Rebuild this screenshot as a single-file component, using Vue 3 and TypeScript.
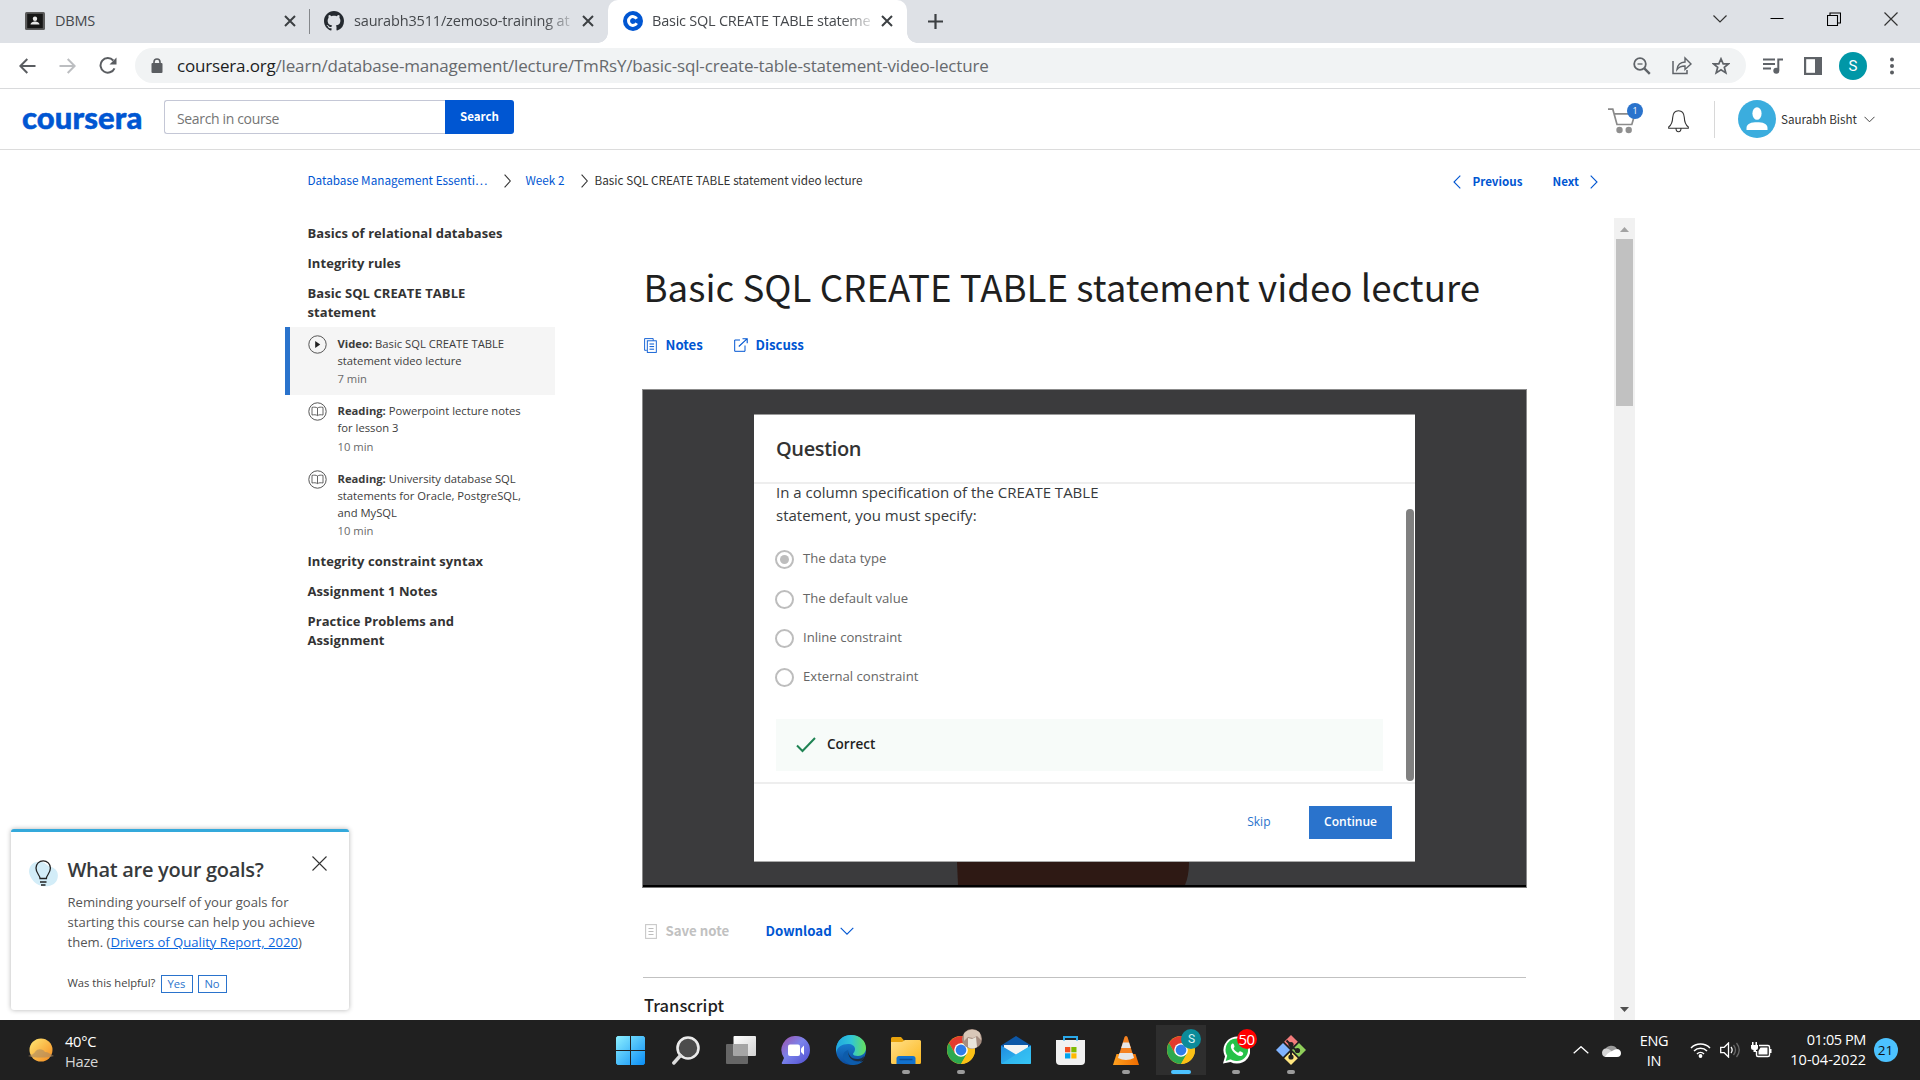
<script setup lang="ts">
interface LessonItem {
  kind: 'video' | 'reading'
  label: string
  lines: string[]
  duration: string
  active?: boolean
}

const items: LessonItem[] = [
  { kind: 'video', label: 'Video:', lines: ['Basic SQL CREATE TABLE', 'statement video lecture'], duration: '7 min', active: true },
  { kind: 'reading', label: 'Reading:', lines: ['Powerpoint lecture notes', 'for lesson 3'], duration: '10 min' },
  { kind: 'reading', label: 'Reading:', lines: ['University database SQL', 'statements for Oracle, PostgreSQL,', 'and MySQL'], duration: '10 min' },
]

const sectionsBefore: string[][] = [['Basics of relational databases'], ['Integrity rules'], ['Basic SQL CREATE TABLE', 'statement']]
const sectionsAfter: string[][] = [['Integrity constraint syntax'], ['Assignment 1 Notes'], ['Practice Problems and', 'Assignment']]

const options = [
  { text: 'The data type', checked: true },
  { text: 'The default value', checked: false },
  { text: 'Inline constraint', checked: false },
  { text: 'External constraint', checked: false },
]
</script>

<template>
  <div class="screen">
    <svg class="defs" width="0" height="0">
      <defs>
        <linearGradient id="win" x1="0" y1="0" x2="1" y2="1"><stop offset="0" stop-color="#8df0ff" /><stop offset="1" stop-color="#0a8df5" /></linearGradient>
        <linearGradient id="chat" x1="0" y1="0" x2="1" y2="1"><stop offset="0" stop-color="#a14fa8" /><stop offset=".45" stop-color="#7b83eb" /><stop offset="1" stop-color="#4f4ccf" /></linearGradient>
        <linearGradient id="edgeA" x1="0" y1="0" x2="1" y2="0"><stop offset="0" stop-color="#1fa7e0" /><stop offset=".5" stop-color="#30c5d8" /><stop offset="1" stop-color="#66e05b" /></linearGradient>
        <linearGradient id="edgeB" x1="0" y1="0" x2="0" y2="1"><stop offset="0" stop-color="#1b8fe0" /><stop offset="1" stop-color="#0c4a9c" /></linearGradient>
        <linearGradient id="folder" x1="0" y1="0" x2="1" y2="1"><stop offset="0" stop-color="#ffe08a" /><stop offset="1" stop-color="#fcb71e" /></linearGradient>
        <linearGradient id="mail" x1="0" y1="0" x2="1" y2="1"><stop offset="0" stop-color="#1f8be0" /><stop offset="1" stop-color="#35c5f5" /></linearGradient>
        <linearGradient id="sun" x1="0" y1="0" x2="1" y2="1"><stop offset="0" stop-color="#ffe873" /><stop offset="1" stop-color="#f58a1f" /></linearGradient>
        <linearGradient id="tv" x1="0" y1="0" x2="1" y2="1"><stop offset="0" stop-color="#fff" /><stop offset="1" stop-color="#d2d2d2" /></linearGradient>
        <linearGradient id="cone" x1="0" y1="0" x2="1" y2="0"><stop offset="0" stop-color="#ffa11f" /><stop offset="1" stop-color="#ef6c00" /></linearGradient>
        <symbol id="chrome" viewBox="0 0 28 28">
          <circle cx="14" cy="14" r="14" fill="#fbc116" />
          <path d="M14 7 H26.1 A14 14 0 0 0 1.9 7 L8 17.4 Z" fill="#e33b2e" />
          <path d="M1.9 7 A14 14 0 0 0 14 28 L20 17.5 L14 14 L8 17.5 Z" fill="#2da94f" />
          <path d="M14 28 A14 14 0 0 0 26.1 7 H14 L20 17.5 Z" fill="#fbc116" />
          <circle cx="14" cy="14" r="6.8" fill="#fff" />
          <circle cx="14" cy="14" r="5.4" fill="#2f7de9" />
        </symbol>
      </defs>
    </svg>

    <header class="tabs">
      <div class="tab tab1">
        <svg width="20" height="18" viewBox="0 0 20 18"><rect width="20" height="18" rx="1.5" fill="#5b5b5b" /><rect x="2.2" y="1.8" width="15.6" height="14.4" fill="#161616" /><circle cx="10" cy="6.7" r="2.2" fill="#e8e8e8" /><path d="M5.5 12.6c0-2.2 2.6-3.2 4.5-3.2s4.5 1 4.5 3.2z" fill="#e8e8e8" /></svg>
        <span class="tt t-a">DBMS</span>
        <svg class="x" width="12" height="12" viewBox="0 0 12 12"><path d="M1 1l10 10M11 1L1 11" stroke="#3c4043" stroke-width="2" /></svg>
      </div>
      <div class="sep"></div>
      <div class="tab tab2">
        <svg width="20" height="20" viewBox="0 0 16 16"><path fill="#24292f" d="M8 0C3.580 0 0 3.580 0 8c0 3.540 2.290 6.530 5.470 7.590.4.070.550-.170.550-.380 0-.190-.010-.820-.010-1.490-2.010.370-2.530-.490-2.690-.940-.090-.230-.480-.940-.820-1.130-.280-.150-.680-.520-.010-.530.630-.010 1.080.580 1.230.820.720 1.210 1.870.870 2.330.660.070-.520.280-.870.510-1.070-1.780-.200-3.640-.890-3.640-3.950 0-.870.310-1.590.820-2.150-.080-.200-.360-1.020.080-2.120 0 0 .670-.210 2.200.820.640-.180 1.320-.270 2-.270s1.360.090 2 .270c1.530-1.040 2.200-.820 2.200-.820.440 1.100.160 1.920.080 2.120.510.560.820 1.270.820 2.150 0 3.070-1.870 3.750-3.650 3.950.290.250.540.730.540 1.480 0 1.070-.010 1.930-.010 2.200 0 .210.150.460.550.380A8.010 8.010 0 0 0 16 8c0-4.420-3.580-8-8-8z" /></svg>
        <span class="tt t-b">saurabh3511/zemoso-training at</span>
        <svg class="x" width="12" height="12" viewBox="0 0 12 12"><path d="M1 1l10 10M11 1L1 11" stroke="#3c4043" stroke-width="2" /></svg>
      </div>
      <div class="tab tab3">
        <svg width="20" height="20" viewBox="0 0 20 20"><circle cx="10" cy="10" r="10" fill="#0056d2" /><path d="M13.7 7.7A4.4 4.4 0 1 0 13.7 12.3" fill="none" stroke="#fff" stroke-width="3" /></svg>
        <span class="tt t-c">Basic SQL CREATE TABLE stateme</span>
        <svg class="x" width="12" height="12" viewBox="0 0 12 12"><path d="M1 1l10 10M11 1L1 11" stroke="#3c4043" stroke-width="2" /></svg>
      </div>
      <svg class="plus" width="15" height="15" viewBox="0 0 15 15"><path d="M7.5 0v15M0 7.5h15" stroke="#3c4043" stroke-width="2.2" /></svg>
      <div class="winctl">
        <svg width="14" height="14" viewBox="0 0 14 14"><path d="M.5 3.5L7 10l6.500-6.500" fill="none" stroke="#333" stroke-width="1.2" /></svg>
        <svg width="14" height="14" viewBox="0 0 14 14"><path d="M.5 6.500h13" stroke="#000" /></svg>
        <svg width="14" height="14" viewBox="0 0 14 14"><path d="M.5 3.5h10v10h-10zM3 3.5V1h10.500v10H11" fill="none" stroke="#000" stroke-width="1.1" /></svg>
        <svg width="14" height="14" viewBox="0 0 14 14"><path d="M.5.5l13 13M13.500.5l-13 13" stroke="#333" stroke-width="1.2" /></svg>
      </div>
    </header>

    <div class="toolbar">
      <svg class="back" width="17" height="16" viewBox="0 0 17 16"><path d="M16.500 8H1.500M8.300 1L1.300 8l7 7" fill="none" stroke="#5a5d61" stroke-width="2" /></svg>
      <svg class="fwd" width="17" height="16" viewBox="0 0 17 16"><path d="M.5 8h15M8.700 1l7 7-7 7" fill="none" stroke="#bcbec1" stroke-width="2" /></svg>
      <svg class="reload" width="18" height="17" viewBox="0 0 18 17"><path d="M15.500 11.300A7.300 7.300 0 1 1 14.300 3.500" fill="none" stroke="#5a5d61" stroke-width="2" /><path d="M17.500.5v7h-7z" fill="#5a5d61" /></svg>
      <div class="omni">
        <svg class="lock" width="12" height="15" viewBox="0 0 12 15"><rect x=".5" y="5" width="11" height="10" rx="1" fill="#5a5d61" /><path d="M3 6V4a3 3 0 0 1 6 0v2" fill="none" stroke="#5a5d61" stroke-width="1.6" /></svg>
        <span class="url"><b>coursera.org</b>/learn/database-management/lecture/TmRsY/basic-sql-create-table-statement-video-lecture</span>
        <svg class="zo" width="18" height="18" viewBox="0 0 18 18"><circle cx="7" cy="7" r="5.8" fill="none" stroke="#5f6368" stroke-width="1.8" /><path d="M4.500 7h5" stroke="#5f6368" stroke-width="1.3" /><path d="M11.300 11.300l5.500 5.500" stroke="#5f6368" stroke-width="2.4" /></svg>
        <svg class="sh" width="20" height="19" viewBox="0 0 20 19"><path d="M1 5v12.500h14V14" fill="none" stroke="#5f6368" stroke-width="1.5" /><path d="M5 13.500c.6-5 3.500-7.300 8-7.500V2l6 6-6 5.500V10c-3.500 0-6 .8-8 3.500z" fill="none" stroke="#5f6368" stroke-width="1.4" /></svg>
        <svg class="st" width="18" height="18" viewBox="0 0 18 18"><path d="M9 1.800l2.200 5h5.300l-4.200 3.500 1.500 5.600L9 12.700l-4.800 3.200 1.500-5.600L1.500 6.800h5.300z" fill="none" stroke="#5f6368" stroke-width="1.7" /></svg>
      </div>
      <svg class="pl" width="20" height="16" viewBox="0 0 20 16"><path d="M0 1.500h12M0 6h12M0 10.500h8" stroke="#5f6368" stroke-width="1.9" /><path d="M15.300 12.500V1.500H20" fill="none" stroke="#5f6368" stroke-width="2" /><circle cx="13.300" cy="12.700" r="3" fill="#5f6368" /></svg>
      <svg class="sp" width="18" height="18" viewBox="0 0 18 18"><rect x="1.100" y="1.100" width="15.800" height="15.800" fill="none" stroke="#5f6368" stroke-width="2.2" /><rect x="11" y="0" width="7" height="18" fill="#5f6368" /></svg>
      <span class="me">S</span>
      <svg class="dots" width="4" height="18" viewBox="0 0 4 18"><circle cx="2" cy="2.500" r="2" fill="#5a5d61" /><circle cx="2" cy="9" r="2" fill="#5a5d61" /><circle cx="2" cy="15.500" r="2" fill="#5a5d61" /></svg>
    </div>

    <div class="chead">
      <span class="logo">coursera</span>
      <div class="search"><span class="ph">Search in course</span><span class="sbtn">Search</span></div>
      <div class="cart">
        <svg width="28" height="26" viewBox="0 0 28 26"><path d="M0 1.200h4.800L9 16.500h14.800L27 5.800H6" fill="none" stroke="#8a8a8a" stroke-width="1.700" /><circle cx="11.500" cy="22" r="3.200" fill="#8f8f8f" /><circle cx="20.700" cy="22" r="3.200" fill="#8f8f8f" /></svg>
        <span class="cb">1</span>
      </div>
      <svg class="bell" width="21" height="23" viewBox="0 0 21 23"><path d="M.7 18.300V17c2.300-1.700 3.800-4 4-9.500C5 3 7.500.7 10.500.7S16 3 16.300 7.500c.2 5.500 1.700 7.800 4 9.500v1.300zM8 18.300c0 4.600 5 4.600 5 0" fill="none" stroke="#333" stroke-width="1.1" /></svg>
      <div class="vline"></div>
      <svg class="ava" width="38" height="38" viewBox="0 0 38 38"><circle cx="19" cy="19" r="19" fill="#3badde" /><ellipse cx="19" cy="13.500" rx="4.600" ry="6.300" fill="#fff" /><path d="M8.500 30v-2c0-4.500 5-5.700 10.500-5.700S29.500 23.500 29.500 28v2z" fill="#fff" /></svg>
      <span class="uname">Saurabh Bisht</span>
      <svg class="uch" width="11" height="7" viewBox="0 0 11 7"><path d="M.5.8l5 5 5-5" fill="none" stroke="#444" /></svg>
    </div>

    <div class="crumbs">
      <a>Database Management Essenti…</a>
      <svg class="c1" width="7" height="14" viewBox="0 0 7 14"><path d="M.6.600L6.300 7 .6 13.400" fill="none" stroke="#333" stroke-width="1.1" /></svg>
      <a class="wk">Week 2</a>
      <svg class="c2" width="7" height="14" viewBox="0 0 7 14"><path d="M.6.600L6.300 7 .6 13.400" fill="none" stroke="#333" stroke-width="1.1" /></svg>
      <span class="cur">Basic SQL CREATE TABLE statement video lecture</span>
      <div class="pn">
        <svg width="8" height="14" viewBox="0 0 8 14"><path d="M7.300.600L1 7l6.300 6.400" fill="none" stroke="#0056d2" stroke-width="1.1" /></svg>
        <b class="prev">Previous</b><b class="next">Next</b>
        <svg width="8" height="14" viewBox="0 0 8 14"><path d="M.7.600L7 7 .7 13.400" fill="none" stroke="#0056d2" stroke-width="1.1" /></svg>
      </div>
    </div>

    <div class="body">
      <nav class="side">
        <h4 v-for="s in sectionsBefore" :key="s[0]"><div v-for="l in s" :key="l">{{ l }}</div></h4>
        <div class="items">
          <div v-for="(it, i) in items" :key="i" class="item" :class="{ active: it.active }">
            <svg width="19" height="19" viewBox="0 0 19 19">
              <circle cx="9.500" cy="9.500" r="8.700" fill="none" stroke="#555" stroke-width="1" />
              <path v-if="it.kind === 'video'" d="M7.200 6v7l5-3.500z" fill="#222" />
              <path v-else d="M9.500 6c-1.500-1-3.500-1-5.500-.6V13c2-.4 4-.4 5.500.6 1.500-1 3.500-1 5.500-.6V5.400C13 5 11 5 9.500 6zv7.600" fill="none" stroke="#555" stroke-width=".9" />
            </svg>
            <div>
              <div v-for="(l, k) in it.lines" :key="k" class="ln"><b v-if="k === 0">{{ it.label }}&nbsp;</b>{{ l }}</div>
              <div class="dur">{{ it.duration }}</div>
            </div>
          </div>
        </div>
        <h4 v-for="s in sectionsAfter" :key="s[0]"><div v-for="l in s" :key="l">{{ l }}</div></h4>
      </nav>

      <main class="main">
        <h1>Basic SQL CREATE TABLE statement video lecture</h1>
        <div class="acts">
          <svg width="13" height="15" viewBox="0 0 13 15"><path d="M2.800 12.300H.6V.6h8.600v2" fill="none" stroke="#0056d2" stroke-width=".9" /><rect x="3.300" y="2.800" width="9" height="11.600" fill="none" stroke="#0056d2" stroke-width=".9" /><path d="M5.500 6h4.600M5.500 8.600h4.600M5.500 11.200h4.600" stroke="#0056d2" /></svg>
          <b class="notes">Notes</b>
          <svg width="14" height="14" viewBox="0 0 14 14"><path d="M6 2H.7v11.300H11V7.500" fill="none" stroke="#0056d2" /><path d="M4.800 8.500L13 .8M8.500.7h4.700v4.500" fill="none" stroke="#0056d2" stroke-width="1.1" /></svg>
          <b class="discuss">Discuss</b>
        </div>
        <div class="video">
          <div class="modal">
            <div class="mh">Question</div>
            <div class="mb">
              <div class="mc">
                <p>In a column specification of the CREATE TABLE<br />statement, you must specify:</p>
                <div v-for="o in options" :key="o.text" class="opt"><span class="radio" :class="{ on: o.checked }"></span><span>{{ o.text }}</span></div>
                <div class="ok"><svg width="20" height="16" viewBox="0 0 20 16"><path d="M1 8.500l5.500 5.500L19 1" fill="none" stroke="#1f8354" stroke-width="2" /></svg><span>Correct</span></div>
              </div>
              <div class="thumb"></div>
            </div>
            <div class="mf"><span class="skip">Skip</span><span class="cont">Continue</span></div>
          </div>
          <svg class="shirt" width="232" height="25" viewBox="0 0 232 25"><path d="M0 0H232Q232 14 228 23H1z" fill="#2e1914" /></svg>
        </div>
        <div class="save">
          <svg width="12" height="15" viewBox="0 0 12 15"><rect x=".6" y=".6" width="10.800" height="13.800" fill="none" stroke="#c9c9c9" stroke-width="1.1" /><path d="M3.500 4.500h5M3.500 7.500h5M3.500 10.500h5" stroke="#bdbdbd" /></svg>
          <b class="sn">Save note</b><b class="dl">Download</b>
          <svg width="14" height="8" viewBox="0 0 14 8"><path d="M.7.800L7 7.200 13.300.800" fill="none" stroke="#0056d2" stroke-width="1.1" /></svg>
        </div>
        <div class="hr"></div>
        <h3>Transcript</h3>
      </main>

      <div class="sbar">
        <svg width="9" height="5" viewBox="0 0 9 5"><path d="M0 5L4.500 0 9 5z" fill="#a3a3a3" /></svg>
        <div class="sth"></div>
        <svg class="dn" width="9" height="5" viewBox="0 0 9 5"><path d="M0 0L4.500 5 9 0z" fill="#505050" /></svg>
      </div>
    </div>

    <aside class="goals">
      <svg class="bulb" width="29" height="27" viewBox="0 0 29 27"><path d="M0 12C0 4 6 1 13 2c4 1 5 4 9 5 7 2 8 8 6 13-3 7-14 8-20 4-3-2-7-6-8-12z" fill="#d3edf8" /><path d="M11 18.500c0-3.500-4-5-4-10.500a7.200 7.200 0 0 1 14.400 0c0 5.500-4 7-4 10.500zM11 22h6.500M12 25h4.500" fill="none" stroke="#222" stroke-width="1.300" /></svg>
      <div class="gb">
        <div class="gt"><span>What are your goals?</span><svg width="15" height="15" viewBox="0 0 15 15"><path d="M.5.5l14 14M14.500.5l-14 14" stroke="#333" stroke-width="1.1" /></svg></div>
        <p>Reminding yourself of your goals for<br />starting this course can help you achieve<br />them. (<a>Drivers of Quality Report, 2020</a>)</p>
        <div class="hp"><span>Was this helpful?</span><span class="yn">Yes</span><span class="yn no">No</span></div>
      </div>
    </aside>

    <footer class="task">
      <svg class="sun" width="26" height="24" viewBox="0 0 26 24"><circle cx="13" cy="12" r="11.500" fill="url(#sun)" /><path d="M0 18c4-2 5-1 7-4 3-4 8-3 10 0 3 0 5 2 9 4-6 2-20 2-26 0z" fill="#a98b66" opacity=".6" /></svg>
      <div class="wx"><span>40°C</span><span class="hz">Haze</span></div>
      <div class="apps">
        <div class="app"><svg width="29" height="29" viewBox="0 0 29 29"><path d="M1.500 0H14v14H0V1.500zM15 0h12.500L29 1.500V14H15zM0 15h14v14H1.500L0 27.500zM15 15h14v12.500L27.500 29H15z" fill="url(#win)" /></svg></div>
        <div class="app"><svg width="28" height="29" viewBox="0 0 28 29"><circle cx="16" cy="12" r="10.500" fill="#4c4c4c" stroke="#eaeaea" stroke-width="2.600" /><path d="M8.500 19.500L1.800 27" stroke="#dcdcdc" stroke-width="3.400" stroke-linecap="round" /></svg></div>
        <div class="app"><svg width="30" height="28" viewBox="0 0 30 28"><rect x="0" y="8" width="22" height="20" rx="1" fill="#666" /><rect x="7.500" y="0" width="22.500" height="20" rx="1" fill="url(#tv)" /><rect x="7.500" y="8" width="14.500" height="12" fill="#a5a5a5" /></svg></div>
        <div class="app"><svg width="30" height="29" viewBox="0 0 30 29"><path d="M15 0a14 14 0 0 1 0 28H2c-1.500 0-1.500-1-.8-2L3 22A14 14 0 0 1 15 0z" fill="url(#chat)" /><rect x="7" y="8.500" width="12" height="11.500" rx="2" fill="#fff" /><path d="M20 12.500l3-3v9.500l-3-3z" fill="#fff" /></svg></div>
        <div class="app"><svg width="30" height="30" viewBox="0 0 30 30"><circle cx="15" cy="15" r="15" fill="url(#edgeB)" /><path d="M0 14C1 5 7 0 15 0c9 0 15 6 15 13 0 5-4 8-8 8-3 0-5-1-5-2s2-2 2-5c0-3-3-5-7-5-6 0-11 3-12 9z" fill="url(#edgeA)" /><path d="M12 15c-1 7 4 12 10 12 3 0 5-1 6-2-3 4-7 5-12 5-5-1-9-5-9-9 0-3 2-5 5-6z" fill="#0d5cab" /><path d="M12.500 14c-1.500 5 3 11 10 10 3-.5 4-1.500 5-2.500.5 0 .7.300.3 1l-2 3C20 28 10 24 12.500 14z" fill="#202020" opacity=".75" /></svg></div>
        <div class="app"><svg width="30" height="27" viewBox="0 0 30 27"><path d="M0 1.500Q0 0 1.500 0H10l3 3.500H28.500Q30 3.500 30 5v6H0z" fill="#e8a30d" /><path d="M0 5h11l3-2h14.500Q30 3 30 4.500V25.500Q30 27 28.500 27h-27Q0 27 0 25.500z" fill="url(#folder)" /><path d="M5.500 27V21.500Q5.500 19 8 19h14Q24.500 19 24.500 21.500V27z" fill="#1272ce" /><path d="M8.500 22.500h13" stroke="#0c4f97" stroke-width="1.500" /></svg><i></i></div>
        <div class="app"><svg width="28" height="28"><use href="#chrome" /></svg><i></i>
          <svg class="pic" width="20" height="20" viewBox="0 0 20 20"><circle cx="10" cy="10" r="10" fill="#a58d80" /><path d="M2 4.500C5 0 14-1 18 4l1 7-4-4-4 2-5-1-4 4z" fill="#d8c7b8" /><path d="M6 9l4 1 4-2 1 10q-5 3-9 0z" fill="#e9e4da" /></svg></div>
        <div class="app"><svg width="30" height="28" viewBox="0 0 30 28"><path d="M0 9.500L15 0l15 9.500V14H0z" fill="#0d57a6" /><path d="M3 9h24v12H3z" fill="#f4f4f4" /><path d="M0 9.500L15 18.500 30 9.500V27q0 1-1 1H1q-1 0-1-1z" fill="url(#mail)" /><path d="M0 28L15 18.500 30 9.500V27q0 1-1 1z" fill="#36c3f4" opacity=".55" /></svg></div>
        <div class="app"><svg width="29" height="29" viewBox="0 0 29 29"><path d="M8 6V1h13v5" fill="none" stroke="#2aa9ea" stroke-width="2" /><path d="M0 4h29v21q0 4-4 4H4q-4 0-4-4z" fill="#f1f1f1" /><path d="M8 4.500V1h13v3.500" fill="none" stroke="#2aa9ea" stroke-width="2" /><path d="M9 11h5.300v5.300H9z" fill="#f25022" /><path d="M15.300 11h5.200v5.300h-5.200z" fill="#7fba00" /><path d="M9 17.300h5.300v5.200H9z" fill="#00a4ef" /><path d="M15.300 17.300h5.200v5.200h-5.200z" fill="#ffb900" /></svg></div>
        <div class="app"><svg width="26" height="29" viewBox="0 0 26 29"><path d="M3.500 18h19L26 29H0z" fill="url(#cone)" /><path d="M11.500 1q1.500-2 3 0L21 22q-8 4-16 0z" fill="#f58220" /><path d="M10 6.500h6l1.800 5.500H8.200zM6.500 17h13L21 22q-8 4-16 0z" fill="#e6e6e6" /></svg><i></i></div>
        <div class="app cur"><svg width="28" height="28"><use href="#chrome" /></svg><i></i><span class="sb">S</span></div>
        <div class="app"><svg width="27" height="28" viewBox="0 0 27 28"><path d="M0 27.500l2-7A13.500 13.500 0 1 1 7.500 26z" fill="#fff" /><circle cx="13.800" cy="13.800" r="11.300" fill="#25c249" /><path d="M2.700 25l1.700-6 4 4z" fill="#25c249" /><path d="M9.500 7.500c-3 2-1.500 6 1.500 9s7 5 9 2c.7-1.500 0-2-2.800-3.200-1.200-.4-1.200 2-2.700 1.200-2-1-3.500-2.700-4-4.200 0-.8 1.400-1 .9-2.400-.7-2-1-2.700-1.900-2.400z" fill="#fff" /></svg><i></i><span class="wb">50</span></div>
        <div class="app"><svg width="30" height="30" viewBox="0 0 30 30"><path d="M15 0l6.800 6.800L15 13.500 8.200 6.800z" fill="#f37b7b" /><path d="M23 8l7 7-7 7-7-7z" fill="#8fce5a" /><path d="M7 8l7 7-7 7-7-7z" fill="#80b3ff" /><path d="M15 16.500l6.800 6.700L15 30l-6.800-6.800z" fill="#ffe680" /><path d="M10.500 5.500L15 10v13M15 11l6 5" fill="none" stroke="#222" stroke-width="2" /><circle cx="15" cy="9.500" r="2.600" fill="#222" /><circle cx="15" cy="22" r="2.600" fill="#222" /><circle cx="21.500" cy="15.500" r="2.600" fill="#222" /></svg><i></i></div>
      </div>
      <div class="tray">
        <svg width="16" height="8" viewBox="0 0 16 8"><path d="M.7 7.300L8 .7l7.300 6.600" fill="none" stroke="#fff" stroke-width="1.300" /></svg>
        <svg class="cl" width="20" height="13" viewBox="0 0 20 13"><path d="M4 6a6.500 6 0 0 1 12-1l-4 3z" fill="#9a9a9a" /><path d="M4.500 13A4.300 4.300 0 0 1 5 4.500q3 0 6 3L5 13z" fill="#d5d5d5" /><path d="M4 13q1-3 5-5l5-2.500a4 4 0 0 1 6 3.500q0 4-4 4z" fill="#fff" /></svg>
        <div class="lang"><span>ENG</span><span>IN</span></div>
        <svg class="wf" width="21" height="16" viewBox="0 0 21 16"><path d="M1 6a13.500 13.500 0 0 1 19 0M4 9a9.200 9.200 0 0 1 13 0M7 12a5 5 0 0 1 7 0" fill="none" stroke="#fff" stroke-width="1.500" /><circle cx="10.500" cy="14" r="1.900" fill="#fff" /></svg>
        <svg class="vo" width="21" height="16" viewBox="0 0 21 16"><path d="M.7 5.300h3.500L8.500 1v14l-4.300-4.300H.7z" fill="none" stroke="#fff" stroke-width="1.300" /><path d="M11 5q2.300 3 0 6" fill="none" stroke="#fff" stroke-width="1.300" /><path d="M13.500 3q4 5 0 10M16.500 1q5.500 7 0 14" fill="none" stroke="#666" stroke-width="1.300" /></svg>
        <svg class="ba" width="21" height="16" viewBox="0 0 21 16"><path d="M8 3.500h9q1.500 0 1.500 1.500v8q0 1.500-1.500 1.500H7q-1.500 0-1.500-1.500V9" fill="none" stroke="#fff" stroke-width="1.400" /><path d="M9.500 5.500h7v7h-9V9z" fill="#fff" /><path d="M19 7h1.500v4H19zM0 3h7v3q0 2-2 2v2H2.500V8Q0 8 0 6zM1 0h1.500v3H1zM4.500 0H6v3H4.500z" fill="#fff" /></svg>
        <div class="clock"><span class="tm">01:05 PM</span><span class="dt">10-04-2022</span></div>
        <span class="nb">21</span>
      </div>
    </footer>
  </div>
</template>

<style>
body { overflow: hidden; background: #fff; }
</style>

<style scoped>
* { box-sizing: border-box; }
.screen { width: 1920px; height: 1080px; display: flex; flex-direction: column; position: relative; overflow: hidden; background: #fff; font-family: "Open Sans", "Noto Sans", sans-serif; color: #1f1f1f; white-space: nowrap; }
svg { display: block; flex: none; }
.defs { position: absolute; }

.tabs { height: 43px; flex: none; background: #dee1e6; display: flex; align-items: center; }
.tab { height: 43px; display: flex; align-items: center; padding-bottom: 1px; }
.tab1 { width: 309px; padding-left: 25px; }
.tab2 { width: 298px; padding-left: 14px; }
.tab3 { width: 299px; padding-left: 15px; background: #fff; border-radius: 10px 10px 0 0; position: relative; }
.tab3::before, .tab3::after { content: ''; position: absolute; bottom: 0; width: 10px; height: 10px; }
.tab3::before { left: -10px; background: radial-gradient(circle at 0 0, transparent 9.5px, #fff 10px); }
.tab3::after { right: -10px; background: radial-gradient(circle at 100% 0, transparent 9.5px, #fff 10px); }
.tt { margin-left: 10px; font-size: 14.5px; letter-spacing: -.25px; color: #45484c; overflow: hidden; line-height: 22px; }
.t-a { width: 219px; }
.t-b, .t-c { width: 218px; -webkit-mask-image: linear-gradient(90deg, #000 190px, transparent 225px); mask-image: linear-gradient(90deg, #000 190px, transparent 225px); }
.t-b { letter-spacing: -.17px; }
.t-c { margin-left: 9px; width: 219px; letter-spacing: -.23px; }
.x { margin-left: 10px; }
.sep { width: 1px; height: 25px; background: #84878b; }
.plus { margin-left: 21px; }
.winctl { margin-left: auto; padding-right: 22px; padding-bottom: 6px; display: flex; gap: 43px; }

.toolbar { height: 46px; flex: none; border-bottom: 1px solid #d9dadc; display: flex; align-items: center; background: #fff; }
.back { margin-left: 19px; }
.fwd { margin-left: 23px; }
.reload { margin-left: 23px; }
.omni { margin-left: 18px; width: 1611px; height: 35px; border-radius: 18px; background: #f1f3f4; display: flex; align-items: center; padding-left: 16px; }
.url { margin-left: 14px; width: 1456px; font-size: 17px; letter-spacing: -.175px; line-height: 24px; color: #66696d; }
.url b { font-weight: 400; color: #1c1d1f; }
.sh { margin-left: 21px; }
.st { margin-left: 20px; }
.pl { margin-left: 17px; }
.sp { margin-left: 21px; }
.me { margin-left: 17px; width: 28px; height: 28px; border-radius: 50%; background: #0097a7; color: #fff; font: 15px/28px Roboto, sans-serif; text-align: center; }
.dots { margin-left: 23px; }

.chead { height: 61px; flex: none; border-bottom: 1px solid #dcdcdc; display: flex; align-items: center; }
.logo { margin-left: 22px; width: 120px; font: 900 31px/36px Lato, sans-serif; letter-spacing: .1px; color: #0056d2; -webkit-text-stroke: .5px #0056d2; padding-bottom: 5px; }
.search { margin-left: 22px; margin-bottom: 4px; display: flex; width: 350px; height: 34px; }
.ph { width: 281px; border: 1px solid #c4c7d6; border-right: 0; border-radius: 3px 0 0 3px; padding-left: 12px; font-size: 14px; letter-spacing: -.35px; line-height: 35px; color: #757575; }
.sbtn { flex: 1; background: #0056d2; border-radius: 0 3px 3px 0; color: #fff; text-align: center; font: 700 11.56px/32px "Noto Sans CJK SC", sans-serif; }
.cart { margin-left: 1094px; position: relative; margin-top: 4px; }
.cb { position: absolute; left: 19px; top: -5px; width: 16px; height: 16px; border-radius: 50%; background: #2a73cc; color: #fff; font: 9px/16px "Open Sans", sans-serif; text-align: center; }
.bell { margin-left: 32px; margin-top: 5px; }
.vline { margin-left: 25px; width: 1px; height: 37px; background: #d8d8d8; }
.ava { margin-left: 23px; }
.uname { margin-left: 5px; width: 84px; font: 400 11.65px/16px "Noto Sans CJK SC", sans-serif; color: #333; padding-bottom: 1px; }
.uch { margin-top: 1px; margin-left: -1px; }

.crumbs { height: 68px; flex: none; padding: 21px 0 0 307.5px; display: flex; align-items: flex-start; font: 400 11.75px/18px "Noto Sans CJK SC", sans-serif; color: #333; }
.crumbs > svg { margin-top: 3px; }
.crumbs a { color: #0056d2; width: 180px; }
.c1 { margin-left: 16px; }
.crumbs .wk { margin-left: 15px; width: 39px; }
.c2 { margin-left: 16px; }
.cur { margin-left: 7px; }
.pn { margin-left: auto; width: 467px; display: flex; color: #0056d2; font-size: 11.61px; padding-top: 1px; }
.pn svg { margin-top: 3px; }
.prev { margin-left: 11.5px; width: 80px; }
.next { width: 37.5px; }

.body { flex: 1; min-height: 0; display: flex; }
.side { padding: 6px 0 0 285px; flex: none; box-sizing: content-box; width: 270px; }
h4 { margin: 0 0 11px 22.5px; font-size: 13px; font-weight: 700; line-height: 19px; letter-spacing: .065px; color: #333; }
.items { margin-top: -6px; margin-bottom: 5px; }
.item { border-left: 5px solid transparent; display: flex; padding: 7.5px 0 8px 17.5px; gap: 11px; font-size: 11.24px; line-height: 17px; color: #3c3c3c; }
.item.active { background: #f5f5f5; border-left-color: #2a73cc; }
.dur { line-height: 17px; margin-top: 1.3px; color: #6a6a6a; }

.main { margin-left: 87px; width: 885px; flex: none; height: 802px; overflow: hidden; }
h1 { margin: 43.5px 0 0 1.5px; font: 400 36.7px/48px "Noto Sans CJK SC", sans-serif; color: #1f1f1f; }
.acts { margin-top: 25.5px; height: 20px; display: flex; align-items: center; padding-left: 2px; font: 13.2px/20px "Noto Sans CJK SC", sans-serif; color: #0056d2; }
.notes { margin-left: 8.5px; width: 68.5px; padding-bottom: 1px; }
.discuss { margin-left: 7.5px; padding-bottom: 1px; }
.video { margin-top: 34px; height: 499px; background: #3b3b3d; border: 1px solid #8b8b8b; border-bottom-color: #777; padding: 24px 0 0 111px; box-shadow: inset 0 -2px 0 #000; }
.modal { width: 661px; height: 448px; background: #fff; border-top: 1px solid #9a9a9a; border-bottom: 1px solid #aaa; display: flex; flex-direction: column; }
.mh { height: 69px; flex: none; border-bottom: 2px solid #eee; padding: 20px 0 0 22px; font-size: 20px; letter-spacing: -.38px; font-weight: 600; line-height: 28px; color: #333; }
.mb { height: 298px; flex: none; display: flex; overflow: hidden; padding-left: 22px; }
.mc { width: 607px; }
p { margin: 0; }
.mc p { margin-top: -3px; font-size: 15px; line-height: 23.3px; color: #373a3c; margin-bottom: 11.5px; }
.opt { height: 39.3px; display: flex; align-items: center; font-size: 13.12px; color: #666; }
.opt span:last-child { padding-bottom: 1px; }
.radio { width: 19px; height: 19px; border: 2px solid #bdbdbd; border-radius: 50%; margin: 2px 9px 0 -1px; display: grid; place-items: center; }
.radio.on::after { content: ''; width: 9px; height: 9px; border-radius: 50%; background: #bdbdbd; }
.ok { margin-top: 22.3px; height: 52.5px; background: #f7fbf9; display: flex; align-items: center; padding-left: 20px; gap: 11px; font-size: 13.56px; font-weight: 600; color: #1f1f1f; }
.ok span { padding-bottom: 2px; }
.thumb { margin: 24.5px 0 0 23px; width: 8px; height: 272.5px; border-radius: 4px; background: #808080; flex: none; }
.mf { flex: 1; border-top: 2px solid #eee; display: flex; justify-content: flex-end; padding: 22px 23px 0 0; font-size: 12.04px; }
.skip { color: #2a73cc; line-height: 32px; margin-right: 38.5px; }
.cont { width: 83px; height: 33px; line-height: 32px; background: #2a73cc; color: #fff; font-weight: 600; text-align: center; }
.shirt { margin-left: 203px; }
.save { margin-top: 33px; height: 20px; display: flex; align-items: center; padding-left: 2.5px; font: 13.25px/20px "Noto Sans CJK SC", sans-serif; color: #c1c1c1; }
.save b { padding-bottom: 1px; }
.sn { margin-left: 9px; width: 100px; }
.dl { color: #0056d2; width: 74px; }
.hr { margin: 36px 1px 0; height: 1px; background: #c1c1c1; }
h3 { margin: 15px 0 0 2px; font: 500 16.54px/24px "Noto Sans CJK SC", sans-serif; color: #1f1f1f; }
.sbar { margin-left: 87px; width: 21px; height: 802px; background: #f1f1f1; display: flex; flex-direction: column; align-items: center; padding: 9px 0 8px; }
.sth { margin-top: 7px; width: 17px; height: 167px; background: #c1c1c1; }
.dn { margin-top: auto; }

.goals { position: absolute; left: 11px; top: 829px; width: 338px; height: 181px; background: #fff; border-top: 3px solid #34a9db; border-radius: 3px; box-shadow: 0 0 5px rgba(0, 0, 0, .3); display: flex; padding: 28px 0 0 17.5px; }
.gb { margin-left: 10px; flex: 1; margin-top: -4px; }
.gt { display: flex; justify-content: space-between; padding-right: 22px; font-size: 20px; letter-spacing: -.3px; font-weight: 600; line-height: 28px; color: #373a3c; }
.gb p { margin-top: 8px; font-size: 13.1px; line-height: 20px; color: #555; }
.gb a { color: #0a66dd; text-decoration: underline; }
.hp { margin-top: 22.5px; display: flex; align-items: center; font-size: 11.21px; color: #444; }
.hp > span:first-child { width: 93px; padding-bottom: 3px; }
.yn { width: 32px; height: 18px; border: 1px solid #2a73cc; color: #2a73cc; line-height: 16px; text-align: center; }
.no { width: 29px; margin-left: 5px; }

.task { height: 60px; flex: none; background: #202020; display: flex; align-items: center; color: #fff; }
.sun { margin-left: 28px; }
.wx { margin-left: 11px; width: 538px; display: flex; flex-direction: column; font-size: 14.7px; letter-spacing: -.3px; line-height: 20px; padding-top: 1px; }
.hz { color: #d6d6d6; }
.apps { display: flex; }
.app { width: 55.05px; height: 60px; display: flex; flex-direction: column; align-items: center; justify-content: center; position: relative; }
.app i { position: absolute; bottom: 6px; width: 8px; height: 4px; border-radius: 2px; background: #9b9b9b; }
.app.cur { background: linear-gradient(#2e2e2e, #2e2e2e) center / 50px 50px no-repeat; margin: 0; }
.app.cur i { width: 20px; background: #4cc2ff; }
.pic { position: absolute; left: 29px; top: 9px; }
.sb { position: absolute; left: 28px; top: 9px; width: 20px; height: 20px; border-radius: 50%; background: #0c8b9a; color: #d9f2f4; font: 12px/20px Roboto, sans-serif; text-align: center; }
.wb { position: absolute; left: 28px; top: 9px; width: 20px; height: 20px; border-radius: 50%; background: #f00; color: #fff; font-size: 15px; line-height: 20px; text-align: center; letter-spacing: -.5px; }
.tray { margin-left: auto; display: flex; align-items: center; padding-right: 22.5px; font-size: 14.5px; line-height: 20px; }
.cl { margin-left: 12px; }
.lang { margin-left: 17px; width: 32px; display: flex; flex-direction: column; align-items: center; letter-spacing: -.3px; padding-top: 1px; }
.wf { margin-left: 20px; }
.vo { margin-left: 9px; }
.ba { margin-left: 10px; }
.clock { width: 94px; display: flex; flex-direction: column; align-items: flex-end; }
.tm { letter-spacing: -.4px; }
.dt { letter-spacing: 0; }
.nb { margin-left: 7.5px; width: 24px; height: 24px; border-radius: 50%; background: #4cc2ff; color: #111; font-size: 13.5px; line-height: 24px; text-align: center; }
</style>
